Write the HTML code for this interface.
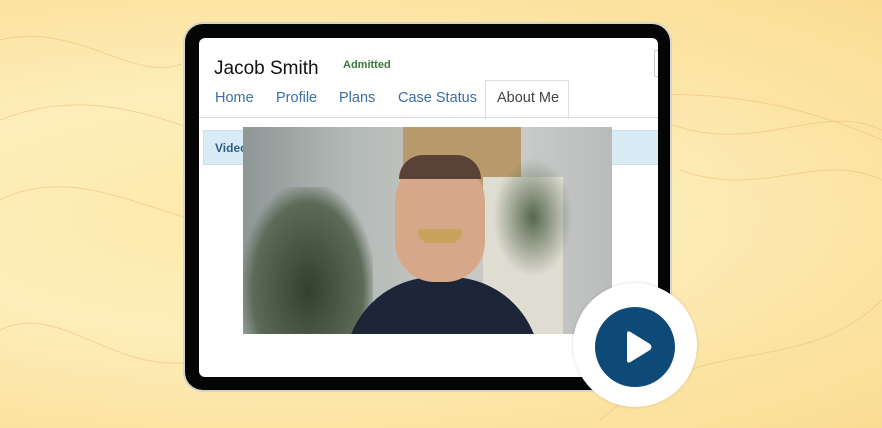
<!DOCTYPE html>
<html><head><style>
body{margin:0;width:882px;height:428px;overflow:hidden;position:relative;font-family:"Liberation Sans",sans-serif;
background:radial-gradient(ellipse at 30% 50%,#fde9a8 0%,#fdeebb 40%,#fce4a4 70%,#fbdc93 100%);}
.tab{position:absolute;left:185px;top:24px;width:485px;height:366px;background:#050505;border-radius:18px;box-shadow:0 0 0 2px #d8d4cc}
.scr{position:absolute;left:199px;top:38px;width:459px;height:339px;background:#fff;border-radius:6px;overflow:hidden}
.name{position:absolute;left:15px;top:20px;font-size:19px;color:#111}
.adm{position:absolute;left:144px;top:21px;font-size:11px;font-weight:bold;color:#3a7a3a}
.nav{position:absolute;top:52px;font-size:14.5px;color:#3a6ea8}
.act{position:absolute;left:286px;top:42px;width:82px;height:38px;border:1px solid #ddd;border-bottom:none;background:#fff}
.line{position:absolute;left:0;top:79px;width:459px;height:1px;background:#ddd}
.bar{position:absolute;left:4px;top:92px;width:455px;height:33px;background:#d9ecf6;border:1px solid #c9e1ee}
.vid{position:absolute;left:243px;top:127px;width:369px;height:207px;overflow:hidden;background:linear-gradient(90deg,#8e9796 0%,#b4bab8 30%,#c6c6c0 55%,#c9cbc9 75%,#b9bcbb 100%)}
</style></head><body>
<svg style="position:absolute;left:0;top:0" width="882" height="428"><g fill="none" stroke="#f0c07a" stroke-width="1" opacity=".6">
<path d="M0 120 C150 60 250 200 400 150 S700 60 882 140"/><path d="M0 200 C100 150 200 260 300 220"/><path d="M600 420 C700 330 800 380 882 300"/><path d="M0 330 C60 300 120 380 200 360"/><path d="M660 120 C750 160 820 100 882 130"/><path d="M0 40 C80 20 140 90 190 60"/><path d="M680 170 C760 200 820 150 882 180"/></g></svg>
<div class="tab"></div>
<div class="scr">
<div class="name">Jacob Smith</div><div class="adm">Admitted</div>
<div class="act"></div><div class="line"></div>
<div class="nav" style="left:16px">Home</div><div class="nav" style="left:77px">Profile</div><div class="nav" style="left:140px">Plans</div><div class="nav" style="left:199px">Case Status</div><div class="nav" style="left:298px;color:#444">About Me</div>
<div style="position:absolute;left:455px;top:12px;width:4px;height:25px;border:1px solid #ccc;border-right:none"></div>
<div class="bar"><span style="position:absolute;left:11px;top:10px;font-size:12px;font-weight:bold;color:#2b5f86">Video</span></div>
</div>
<div class="vid">
<div style="position:absolute;left:160px;top:0;width:118px;height:120px;background:#b99a6c"></div>
<div style="position:absolute;left:240px;top:50px;width:80px;height:157px;background:#dfdcd2"></div>
<div style="position:absolute;left:0;top:60px;width:130px;height:147px;background:radial-gradient(ellipse at 50% 70%,#33402f,#5c6a58 60%,transparent 75%)"></div>
<div style="position:absolute;left:250px;top:30px;width:80px;height:120px;background:radial-gradient(ellipse,#56684e,transparent 70%)"></div>
<div style="position:absolute;left:102px;top:150px;width:195px;height:90px;background:#1d2638;border-radius:90px 90px 0 0"></div>
<div style="position:absolute;left:152px;top:30px;width:90px;height:125px;background:#d7a78a;border-radius:45px 45px 40px 40px"></div>
<div style="position:absolute;left:156px;top:28px;width:82px;height:24px;background:#5b4236;border-radius:42px 42px 0 0"></div>
<div style="position:absolute;left:175px;top:102px;width:44px;height:14px;background:#c9a25c;border-radius:4px 4px 20px 20px"></div>
</div>
<div style="position:absolute;left:573px;top:283px;width:124px;height:124px;border-radius:50%;background:#fff;box-shadow:0 0 3px rgba(0,0,0,.15)"></div>
<div style="position:absolute;left:595px;top:307px;width:80px;height:80px;border-radius:50%;background:#0e4a78"></div>
<svg style="position:absolute;left:595px;top:307px" width="80" height="80"><path d="M32 27 L32 53 Q32 57 35.5 55 L55 43 Q58 40 55 37 L35.5 25 Q32 23 32 27Z" fill="#fff"/></svg>
</body></html>
